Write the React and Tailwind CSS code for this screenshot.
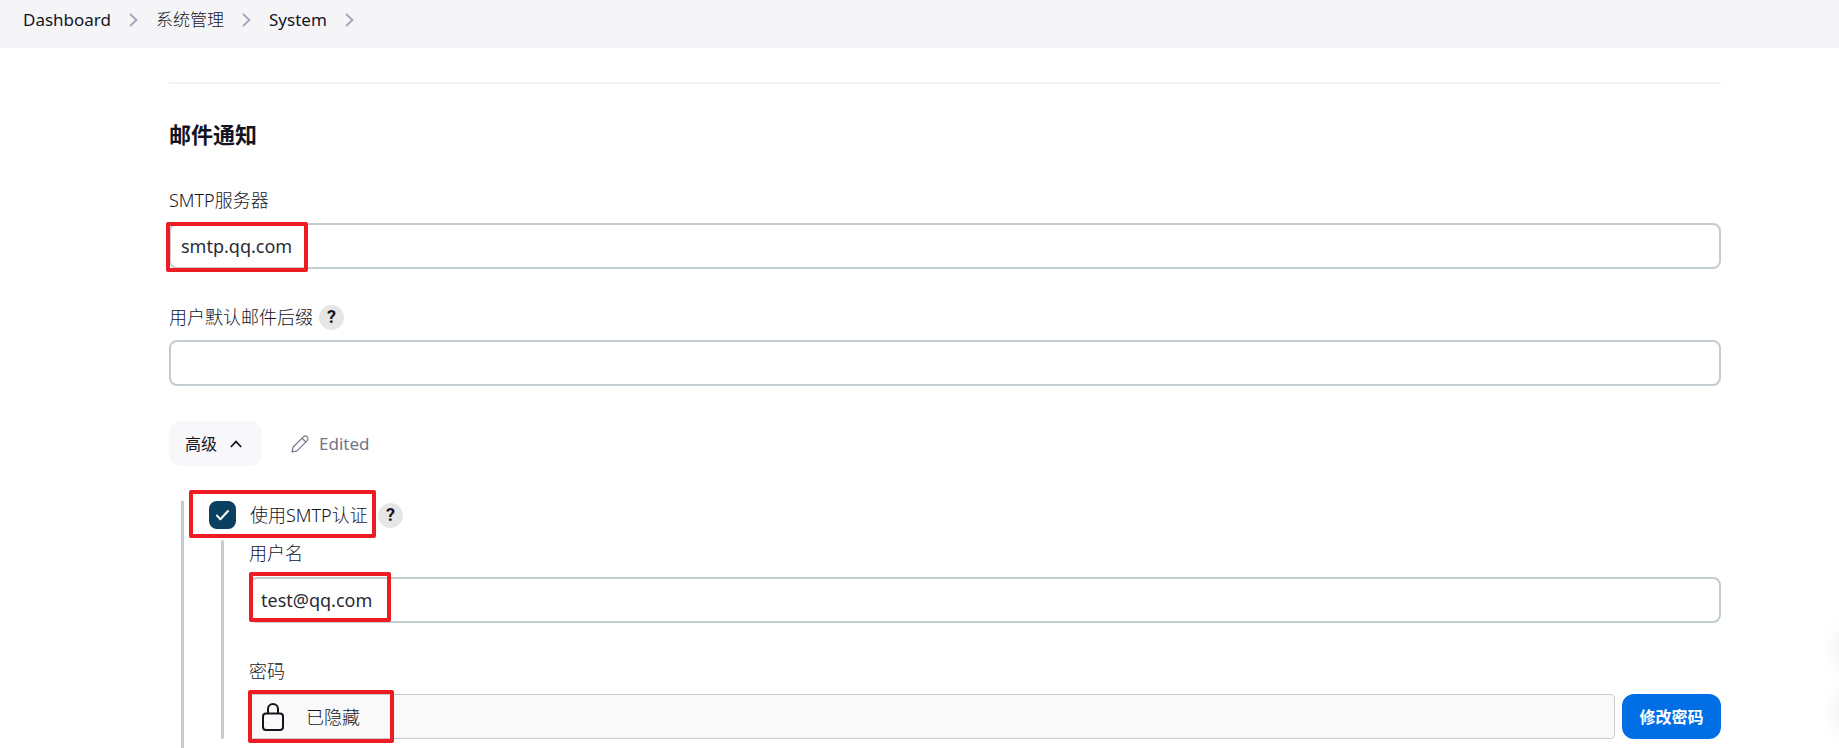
import React, { useState } from 'react'

const fieldClass =
  'block w-full h-[46px] rounded-lg border-2 border-[#c3ccd1] bg-white px-[10px] text-[18px] font-normal text-[#2a2a36] focus:outline-none'

const crumbs = [
  { name: 'Dashboard', className: 'font-normal' },
  { name: '系统管理', className: 'font-light' },
  { name: 'System', className: 'font-normal' }
]

const CrumbArrow = () => (
  <svg className="h-[14px] w-[9px]" viewBox="0 0 9 14" fill="none" stroke="#a5a5b8" strokeWidth="1.8">
    <path d="M1 1l6.5 6L1 13" />
  </svg>
)

const HelpButton = ({ label }) => (
  <button
    type="button"
    aria-label={label}
    className="flex h-[25px] w-[25px] shrink-0 items-center justify-center rounded-full bg-[#e6e6e6] font-['Roboto',sans-serif] text-[18px] leading-none font-bold text-[#14141f]"
  >
    ?
  </button>
)

// Red frame laid over the value that the reader has to fill in
const Marker = ({ className }) => (
  <span aria-hidden="true" className={`pointer-events-none absolute rounded-xs border-4 border-[#ed1c24] ${className}`} />
)

const App = () => {
  const [server, setServer] = useState('smtp.qq.com')
  const [suffix, setSuffix] = useState('')
  const [username, setUsername] = useState('test@qq.com')
  const [auth, setAuth] = useState(true)

  return (
    <div className="relative flex h-screen flex-col overflow-hidden bg-white font-['Noto_Sans','Noto_Sans_CJK_SC',sans-serif] text-[18px] leading-6 font-light text-[#14141f]">
      <nav className="flex h-12 shrink-0 items-center bg-[#f5f5f8] px-[23px] pb-2 text-[17px]">
        <ol className="flex items-center">
          {crumbs.map(({ name, className }) => (
            <li key={name} className="flex items-center">
              <a href="#" className={className}>
                {name}
              </a>
              <span className="mx-[18px]">
                <CrumbArrow />
              </span>
            </li>
          ))}
        </ol>
      </nav>

      <main className="min-h-0 flex-1 overflow-hidden pt-[34px] pr-[118px] pl-[169px]">
        <section className="border-t-2 border-[#f2f2f9] pt-[34px]">
          <h2 className="text-[22px] leading-8 font-bold">邮件通知</h2>

          <div className="mt-[38px]">
            <label htmlFor="server" className="block">
              SMTP服务器
            </label>
            <div className="relative mt-[11px]">
              <input id="server" className={fieldClass} value={server} onChange={(e) => setServer(e.target.value)} />
              <Marker className="-top-px -left-[3px] h-[50px] w-[142px]" />
            </div>
          </div>

          <div className="mt-9">
            <div className="flex h-6 items-center gap-[6px]">
              <label htmlFor="suffix">用户默认邮件后缀</label>
              <HelpButton label="用户默认邮件后缀" />
            </div>
            <input
              id="suffix"
              className={`mt-[11px] ${fieldClass}`}
              value={suffix}
              onChange={(e) => setSuffix(e.target.value)}
            />
          </div>

          <div className="mt-[35px] flex items-center">
            <button
              type="button"
              className="flex h-[45px] w-[93px] items-center gap-[13px] rounded-xl bg-[#f8f8fa] pl-4 text-[16px] font-normal"
            >
              高级
              <svg className="h-2 w-3" viewBox="0 0 12 8" fill="none" stroke="currentColor" strokeWidth="1.7">
                <path d="M.8 7L6 1.6 11.2 7" />
              </svg>
            </button>
            <span className="ml-[29px] flex items-center gap-[10px] text-[17px] font-normal text-[#73738c]">
              <svg
                className="h-[18px] w-[18px]"
                viewBox="0 0 18 18"
                fill="none"
                stroke="currentColor"
                strokeWidth="1.2"
                strokeLinejoin="round"
              >
                <path d="M1 17l1.2-5L12.4 1.8a2.6 2.6 0 0 1 3.8 3.8L6 15.8z" />
                <path d="M11 3.2l3.8 3.8" />
              </svg>
              Edited
            </span>
          </div>

          <div className="mt-[35px] ml-3 border-l-[3px] border-[#c3ccd1] pb-12 pl-[25px]">
            <div className="relative flex h-7 items-center">
              <span className="relative h-7 w-[27px]">
                <input
                  id="auth"
                  type="checkbox"
                  checked={auth}
                  onChange={(e) => setAuth(e.target.checked)}
                  className="block h-7 w-[27px] appearance-none rounded-lg border-2 border-[#0b4060] checked:bg-[#0b4060]"
                />
                {auth && (
                  <svg
                    className="pointer-events-none absolute top-2 left-[7px] h-3 w-[13px]"
                    viewBox="0 0 13 12"
                    fill="none"
                    stroke="#fff"
                    strokeWidth="2"
                    strokeLinecap="round"
                    strokeLinejoin="round"
                  >
                    <path d="M1 6.6l3.4 3.6L12 2" />
                  </svg>
                )}
              </span>
              <label htmlFor="auth" className="ml-[14px] w-[128px] whitespace-nowrap">
                使用SMTP认证
              </label>
              <HelpButton label="使用SMTP认证" />
              <Marker className="-top-[11px] -left-5 h-12 w-[187px]" />
            </div>

            <div className="mt-[11px] ml-3 flex gap-[25px]">
              <span className="w-[3px] shrink-0 rounded-full bg-[#c3ccd1]" />
              <div className="flex-1">
                <label htmlFor="username" className="block pt-px">
                  用户名
                </label>
                <div className="relative mt-3">
                  <input
                    id="username"
                    className={fieldClass}
                    value={username}
                    onChange={(e) => setUsername(e.target.value)}
                  />
                  <Marker className="-top-[5px] left-0 h-[50px] w-[142px]" />
                </div>

                <div className="mt-9">
                  <span className="block">密码</span>
                  <div className="relative mt-[11px] flex gap-[7px]">
                    <div className="flex h-[45px] flex-1 items-center rounded-sm border border-[#c3ccd1] bg-[#f9f9f9] pl-3">
                      <svg
                        className="h-7 w-[22px]"
                        viewBox="0 0 22 28"
                        fill="none"
                        stroke="currentColor"
                        strokeWidth="2"
                      >
                        <rect x="1" y="10.5" width="20" height="16.5" rx="3" />
                        <path d="M6 10.5V6a5 5 0 0 1 10 0v4.5" />
                      </svg>
                      <span className="ml-[22px]">已隐藏</span>
                    </div>
                    <button
                      type="button"
                      className="h-[45px] w-[99px] rounded-xl bg-[#006fe6] text-[16px] font-bold text-white"
                    >
                      修改密码
                    </button>
                    <Marker className="-top-1 -left-px h-[53px] w-[146px]" />
                  </div>
                </div>
              </div>
            </div>
          </div>
        </section>
      </main>

      {/* Floating buttons parked past the right edge, only their shadows reach in */}
      <span className="absolute -right-10 bottom-[78px] h-10 w-10 rounded-full shadow-[0_0_24px_rgba(0,0,0,0.1)]" />
      <span className="absolute -right-10 bottom-4 h-10 w-10 rounded-full shadow-[0_0_24px_rgba(0,0,0,0.1)]" />
    </div>
  )
}

export default App
